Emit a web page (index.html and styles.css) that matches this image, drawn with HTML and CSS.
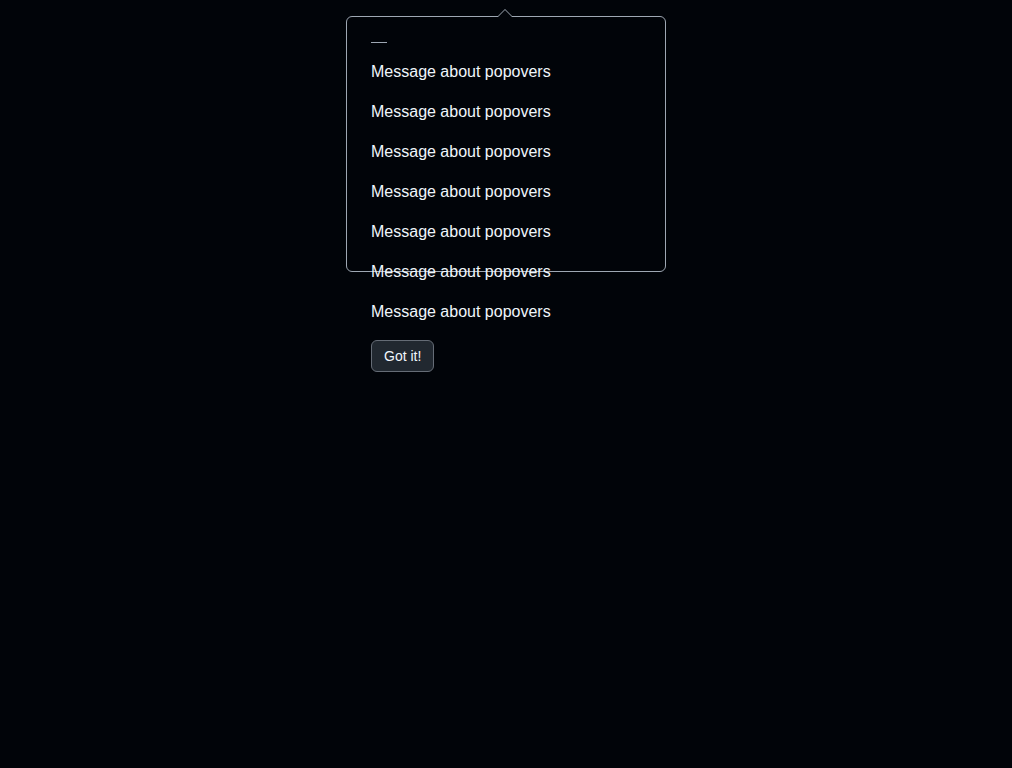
FILE: index.html
```html
<!DOCTYPE html>
<html>
<head>
<meta charset="utf-8">
<link rel="stylesheet" href="styles.css">
</head>
<body>
<div class="page">
  <div class="popover">
    <div class="dash"></div>
    <p class="msg">Message about popovers</p>
    <p class="msg">Message about popovers</p>
    <p class="msg">Message about popovers</p>
    <p class="msg">Message about popovers</p>
    <p class="msg">Message about popovers</p>
    <p class="msg">Message about popovers</p>
    <p class="msg">Message about popovers</p>
    <button class="btn">Got it!</button>
  </div>
</div>
</body>
</html>
```
FILE: styles.css
```css
html, body {
  margin: 0;
  padding: 0;
  background: #010409;
  height: 100%;
}
body {
  font-family: "Liberation Sans", Arial, sans-serif;
  color: #f0f6fc;
}
.page {
  padding-top: 16px;
}
.popover {
  position: relative;
  box-sizing: border-box;
  width: 320px;
  height: 256px;
  margin: 0 auto;
  padding: 24px;
  border: 1px solid #9ea7b3;
  border-radius: 6px;
  background: #010409;
}
.popover::before,
.popover::after {
  content: "";
  position: absolute;
  left: 50%;
  width: 0;
  height: 0;
  border-style: solid;
  border-color: transparent;
}
.popover::before {
  top: -16px;
  margin-left: -9px;
  border-width: 8px;
  border-bottom-color: #9ea7b3;
}
.popover::after {
  top: -14px;
  margin-left: -8px;
  border-width: 7px;
  border-bottom-color: #010409;
}
.dash {
  width: 16px;
  height: 1px;
  background: #9ea7b3;
  margin-top: 1px;
  margin-bottom: 17px;
}
.msg {
  margin: 0 0 16px;
  font-size: 16px;
  line-height: 24px;
  white-space: nowrap;
  color: #f0f6fc;
}
.btn {
  display: block;
  height: 32px;
  padding: 0 12px;
  font-family: "Liberation Sans", Arial, sans-serif;
  font-size: 14px;
  color: #f0f6fc;
  background: #212830;
  border: 1px solid #656c76;
  border-radius: 6px;
}
```
